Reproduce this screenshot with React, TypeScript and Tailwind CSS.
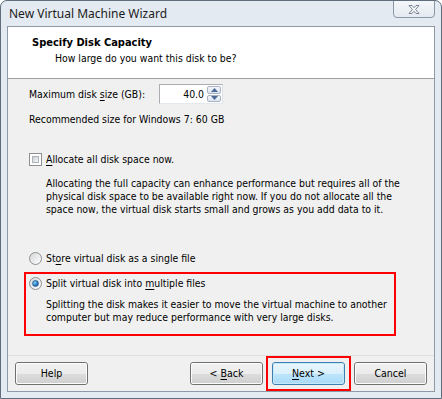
import React from "react";

const ui = { fontFamily: '"DejaVu Sans Condensed", "Liberation Sans", sans-serif' };
const titleFont = { fontFamily: '"Noto Sans", "Open Sans", sans-serif' };

function U({ children }: { children: React.ReactNode }) {
  return <span className="underline underline-offset-2">{children}</span>;
}

function CloseGlyph() {
  return (
    <svg width="14" height="11" viewBox="0 0 14 11">
      <path
        d="M2 1.5 L5 1.5 L7 3.7 L9 1.5 L12 1.5 L8.6 5.5 L12 9.5 L9 9.5 L7 7.3 L5 9.5 L2 9.5 L5.4 5.5 Z"
        fill="#f4f6f9"
        stroke="#6d7a88"
        strokeWidth="0.9"
        strokeLinejoin="round"
      />
    </svg>
  );
}

function Checkbox() {
  return (
    <span className="w-[13px] h-[13px] border border-[#8e8f8f] bg-white p-[2px] shrink-0">
      <span className="block w-full h-full border border-[#aeb3b9] bg-gradient-to-br from-[#cbcfd5] to-[#f7f7f7]" />
    </span>
  );
}

function Radio({ checked }: { checked?: boolean }) {
  return (
    <span className="w-[13px] h-[13px] rounded-full border border-[#8e8f8f] bg-gradient-to-br from-[#d4d6d9] to-[#ffffff] flex items-center justify-center shrink-0">
      {checked && (
        <span className="w-[7px] h-[7px] rounded-full bg-[radial-gradient(circle_at_35%_35%,#8ad7f8,#1f6fb5_60%,#0c4a8a)] border border-[#2f6aa3]" />
      )}
    </span>
  );
}

function Button({
  children,
  primary,
}: {
  children: React.ReactNode;
  primary?: boolean;
}) {
  return (
    <button
      className={`w-[73px] h-[23px] rounded-[3px] border text-[10.5px] text-black ${
        primary
          ? "border-[#3c7fb1] bg-[linear-gradient(#eaf6fd_0%,#d9f0fc_50%,#bee6fd_50%,#a7d9f5_100%)]"
          : "border-[#707070] bg-[linear-gradient(#f2f2f2_0%,#ebebeb_50%,#dddddd_50%,#cfcfcf_100%)]"
      }`}
      style={ui}
    >
      <span
        className={`block h-full rounded-[2px] border ${
          primary ? "border-[#c7e8f9]" : "border-[#fcfcfc]"
        } leading-[19px]`}
      >
        {children}
      </span>
    </button>
  );
}

export default function App() {
  return (
    <div className="w-[442px] h-[399px] bg-[#e3eaf2] border border-[#5f6d7c] rounded-t-[7px] flex flex-col overflow-hidden">
      {/* TITLE BAR */}
      <div className="relative h-[25px] shrink-0">
        <div className="pl-[8px] pt-[5px] text-[12px] text-[#1c1c1c] leading-[16px]" style={titleFont}>
          New Virtual Machine Wizard
        </div>
        <div className="absolute top-[-1px] right-[6px] w-[42px] h-[18px] border border-[#8b98a7] rounded-b-[4px] bg-[linear-gradient(#f4f7fa,#e4eaf1)] flex items-center justify-center">
          <CloseGlyph />
        </div>
      </div>

      {/* CLIENT */}
      <div
        className="flex-1 mx-[6px] mb-[6px] border border-[#8e9aa8] bg-[#f0f0f0] flex flex-col text-[10.4px] leading-[13px] text-black whitespace-nowrap"
        style={ui}
      >
        {/* HEADER */}
        <div className="h-[52px] bg-white border-b border-[#a0a0a0] shrink-0">
          <div className="pl-[24px] pt-[9px] font-bold text-[11px]">Specify Disk Capacity</div>
          <div className="pl-[47px] pt-[3px]">How large do you want this disk to be?</div>
        </div>

        {/* BODY */}
        <div className="flex-1 pl-[21px]">
          <div className="mt-[5px] flex items-center h-[20px]">
            <span className="w-[130px] shrink-0">
              Maximum disk <U>s</U>ize (GB):
            </span>
            <div className="w-[64px] shrink-0 flex h-[20px] border border-[#abadb3] border-r-[#dbdfe6] border-b-[#e3e9ef] bg-white">
              <span className="flex-1 text-right pr-[3px] leading-[18px]">40.0</span>
              <div className="w-[15px] flex flex-col gap-[1px] p-[1px] pl-0">
                <span className="flex-1 border border-[#a9b5c5] rounded-[2px] bg-[linear-gradient(#f3f6fa,#dbe3ee)] flex items-center justify-center">
                  <svg width="7" height="4" viewBox="0 0 7 4"><path d="M3.5 0 L7 4 L0 4 Z" fill="#4c6a98" /></svg>
                </span>
                <span className="flex-1 border border-[#a9b5c5] rounded-[2px] bg-[linear-gradient(#f3f6fa,#dbe3ee)] flex items-center justify-center">
                  <svg width="7" height="4" viewBox="0 0 7 4"><path d="M0 0 L7 0 L3.5 4 Z" fill="#4c6a98" /></svg>
                </span>
              </div>
            </div>
          </div>

          <div className="mt-[9px]">Recommended size for Windows 7: 60 GB</div>

          <div className="mt-[27px] flex items-center gap-[4px]">
            <Checkbox />
            <span>
              <U>A</U>llocate all disk space now.
            </span>
          </div>
          <p className="mt-[11px] pl-[17px]">
            Allocating the full capacity can enhance performance but requires all of the
            <br />
            physical disk space to be available right now. If you do not allocate all the
            <br />
            space now, the virtual disk starts small and grows as you add data to it.
          </p>

          <div className="mt-[36px] flex items-center gap-[4px]">
            <Radio />
            <span>
              St<U>o</U>re virtual disk as a single file
            </span>
          </div>

          <div className="mt-[7px] ml-[-5px] w-[372px] border-2 border-[#ff0000] pl-[3px] pt-[3px] pb-[10px]">
            <div className="flex items-center gap-[4px]">
              <Radio checked />
              <span>
                Split virtual disk into <U>m</U>ultiple files
              </span>
            </div>
            <p className="mt-[8px] pl-[17px]">
              Splitting the disk makes it easier to move the virtual machine to another
              <br />
              computer but may reduce performance with very large disks.
            </p>
          </div>
        </div>

        {/* FOOTER */}
        <div className="h-[36px] shrink-0 border-t border-[#dfdfdf] flex items-center px-[7px]">
          <Button>Help</Button>
          <div className="flex-1" />
          <Button>
            &lt; <U>B</U>ack
          </Button>
          <div className="ml-[3px] border-2 border-[#ff0000] p-[4px] -my-[6px]">
            <Button primary>
              <U>N</U>ext &gt;
            </Button>
          </div>
          <div className="ml-[3px]">
            <Button>Cancel</Button>
          </div>
        </div>
      </div>
    </div>
  );
}
